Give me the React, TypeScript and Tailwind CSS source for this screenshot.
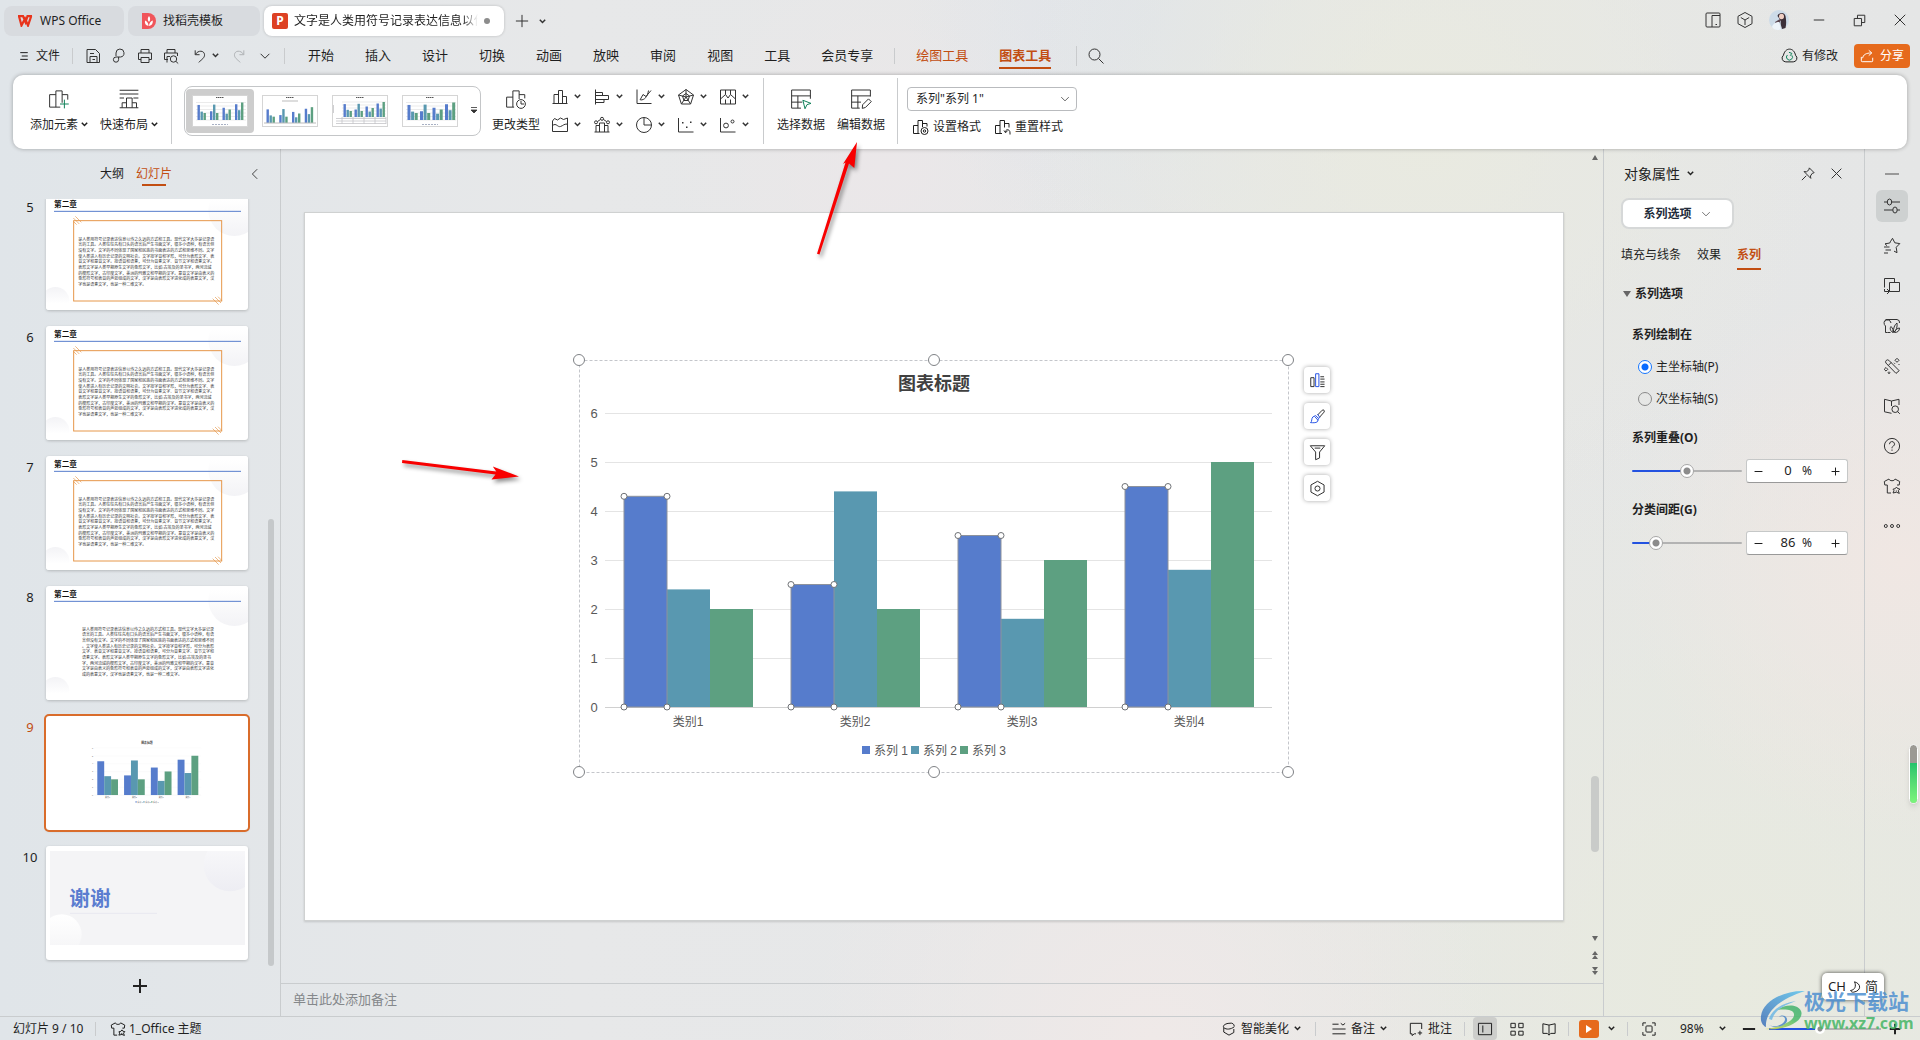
import {useState} from 'react';
import type {ReactNode} from 'react';
import {clsx} from 'clsx';

// All glyphs are drawn on a 16x16 grid, the stroke stays 1px at any size
const icons: Record<string, ReactNode> = {
    menu: <path d="M3 3.5h10M5 8h8M3 12.5h10"/>,
    save: <path d="M2 14.5v-13h8.5l4 4v9zM5 14.5V8.5h7v6M5 5.5h4M7.5 11.5h2.5"/>,
    link: <path d="M5 8V5a4 4 0 1 1 4.5 4H5a2.6 2.6 0 1 0 2.6 2.6V9"/>,
    print: <path d="M4 5V1.5h8V5M4 11.5H1.5V5h13v6.5H12M4 9.5h8v5H4z"/>,
    preview: <><path d="M4 5V1.5h8V5M5 11.5H1.5V5h13v3M4 14.5V8.5h3"/><circle cx="10.5" cy="11" r="3.2"/><path d="M13 13.5l2.2 2"/></>,
    undo: <path d="M2.5 1.5v5h5M2.7 6.2C6 1 12.8 1.5 13.2 6.5 13.4 10 10 12 6.5 15.3"/>,
    redo: <path d="M13.5 1.5v5h-5M13.3 6.2C10 1 3.2 1.5 2.8 6.5 2.6 10 6 12 9.5 15.3"/>,
    down: <path d="M3 5.5l5 5 5-5"/>,
    left: <path d="M10.5 2.5L5 8l5.5 5.5"/>,
    plus: <path d="M8 1v14M1 8h14"/>,
    minus: <path d="M1 8h14"/>,
    close: <path d="M2 2l12 12M14 2L2 14"/>,
    search: <><circle cx="6.5" cy="6.5" r="5.5"/><path d="M10.5 10.5l5 5"/></>,
    split: <><rect x="1" y="1" width="14" height="14" rx="1"/><path d="M7 15V3.5h8M10.5 12.5h1.5"/></>,
    cube: <path d="M8 .5l7 3.8v7.4L8 15.5l-7-3.8V4.3zM3.8 5.5L8 8l4.2-2.5M8 8v5"/>,
    restore: <path d="M1.5 5.5h9v9h-9zM5.5 5.5v-4h9v9h-4"/>,
    cloud: <><path d="M4.5 14h7a3.5 3.5 0 0 0 2.2-6.2C13 4.5 11 2 8 2S3 4.5 2.3 7.8A3.5 3.5 0 0 0 4.5 14z"/><path stroke="#12825b" d="M6 7.5a2.8 2.8 0 1 0 4.2.3M7.5 5l2.7 1-1.5 2.2"/></>,
    share: <path d="M1.5 9v4.5a1 1 0 0 0 1 1h11a1 1 0 0 0 1-1V10M3 10.5C3.5 6.5 7 4.5 13 4.5M10 1.5l3.5 3-3.5 3"/>,
    addElement: <><path d="M.5 14.5V4.5h5M9 14.5H.5M5.5 14.5v-13h5v9.5M10.5 4.5h4.5v4"/><path stroke="#12825b" d="M12.3 8.5v7M8.8 12h7"/></>,
    quickLayout: <path d="M.5 1h15M.5 4h15M.5 7.2H4M11.5 7.2h4M.5 15h15M2.5 15v-4h3.5M6 15V7.2h4.5V15M10.5 11h3.5v4"/>,
    changeType: <><path d="M.5 14.5V6.5h5M6.5 14.5h-6M5.5 14.5v-13h5V8M10.5 4.5h4.5v3"/><circle cx="12" cy="12" r="3.5"/><path d="M12 9.6V12h2.4"/></>,
    col: <path d="M2 14.5v-9h4.5M6.5 14.5v-13h4v13M10.5 7.5h4v7M.5 14.5h15"/>,
    bar: <path d="M1.5 .5v15M1.5 3.5h7v3M1.5 6.5h13v4h-13M10 10.5v3H1.5"/>,
    line: <path d="M1 .5v14h14.5M4 11l3-5.5 3 2L15 1.5M4.5 11c4 0 7-3 8-9.5"/>,
    radar: <path d="M8 .5l7.5 5.5-2.9 9H3.4L.5 6zM8 .5v7.5M15.5 6L8 8M12.6 15L8 8M3.4 15L8 8M.5 6L8 8M8 4.5L11.5 7 10 11.5H6L4.5 7z"/>,
    map: <path d="M.5 1h15v14H.5zM5.5 1v4.5M10.5 1v4.5M.5 10l5-4.5 2.5 3.5 2.5-3.5 5 4.5M5.5 10.5V15M10.5 10.5V15"/>,
    area: <path d="M.5 14.5V4l2-2.5 3 1.5 3-2 3 1.5 4-1.5v13.5zM.5 8.5c4-3 5 2 8 1s3-2.5 7-2.5"/>,
    combo: <><path d="M2 15V8.5h3.5M5.5 15V6h5v9M10.5 8.5H14V15M.5 15h15M3.5 4.5l3-2M9.5 2.5l3 2"/><circle cx="2" cy="5.3" r="1.5"/><circle cx="8" cy="1.8" r="1.5"/><circle cx="14" cy="5.3" r="1.5"/></>,
    pie: <><circle cx="8" cy="8" r="7.5"/><path d="M8 .5V8h7.5"/></>,
    scatter: <><path d="M.5 1v14h15"/><path fill="currentColor" stroke="none" d="M4 5h1.5v1.5H4zM8 9.5h1.5V11H8zM12 4.5h1.5V6H12z"/></>,
    bubble: <><path d="M.5 1v14h15"/><circle cx="6" cy="8.5" r="2.4"/><circle cx="12.5" cy="4.5" r="1.5"/></>,
    selectData: <><path d="M.5 .8h15v7M.5 .8v14.5H8M.5 5.5h15M.5 10.5H9M5.5 5.5v9.8"/><path stroke="#12825b" d="M9.5 9l6.5 2.5-3.2 1-1.6 3.3z"/></>,
    editData: <path d="M.5 .8h15V6M.5 .8v14.5H7M.5 5.5h15M.5 10.5H8M5.5 5.5v9.8M9 15.5l.3-2.9 4.7-4.7 2.2 2.2-4.7 4.7z"/>,
    setFormat: <><path d="M.5 14.5v-8h4.5M6.5 14.5h-6M5 14.5v-13h4.5V8M9.5 4.5h4.5v3"/><circle cx="11.5" cy="12" r="3.5"/><circle cx="11.5" cy="12" r="1.2"/></>,
    resetStyle: <path d="M.5 14.5v-8h4.5M7 14.5H.5M5 14.5v-13h4.5v7M9.5 4.5h4.5v4M9 11.5l1.5 2 2-1.5M10.3 13.5c0-4 5-3.5 4.7.5v1.5"/>,
    pin: <path d="M9.5 1l5.5 5.5-2.2.8-2 3 .4 2.7L3.5 5.2l2.7.3 2.8-2.2zM6 10L1 15"/>,
    sliders: <><path d="M0 4h3.3M7.7 4H16M0 12h8.8M13.2 12H16"/><ellipse cx="5.5" cy="4" rx="2.2" ry="3"/><ellipse cx="11" cy="12" rx="2.2" ry="3"/></>,
    star: <path d="M6.5 3.5L8.5 .3l2.3 4.5 5 .8-3.6 3.7.8 5.4-3-1.6M6.5 3.3L5.8 5l-4.8.8L3 7.7M0 9h5.5M1.5 12H7M0 15h4"/>,
    swap: <path d="M.5 9.5v-9h10v4M5.5 4.5h10v9h-10zM.5 11v2.5h4.5M3 11l2.5 2.5L3 16"/>,
    image: <path d="M3.5 14.5H1.5V8A4 4 0 0 1 2 1.5h11a3 3 0 0 1 2.5 3.5M1 3a3.5 3.5 0 0 1 6 2M3.5 14.5h3M8.5 14.5C5.5 12 6 9.5 7 8.5c2 2 2.5 4 1.5 6zM9.5 14.5C9 11 10.5 6.5 13 5c.5 4-.5 7.5-3.5 9.5zM10.5 14.5c.5-2.5 3-4.5 5-4.5 0 3-2 4.5-5 4.5z"/>,
    magic: <><path d="M4.8 2.3a2 2 0 0 0-2.8 2.8l10 10.3 3.2-2.7zM4.3 7.5l3-3.2"/><path d="M13 .3l2 2-2 2-2-2zM10 4.8l1 1M2 9.5l1.8 1.8L2 13.1.2 11.3zM5 13.8l1 1-1 1-1-1zM15 6v1"/></>,
    book: <><path d="M7.5 3L.5 1.3v12.5l7 1.5M7.5 3l7.5-1.7V7M7.5 3v5"/><circle cx="11.2" cy="11.2" r="3.3"/><path d="M13.5 13.5l2.3 2.3"/></>,
    help: <><circle cx="8" cy="8" r="7.6"/><path d="M5.5 6.2a2.5 2.5 0 1 1 3.8 2C8.3 8.7 8 9 8 10.3M8 11.5v1.3"/></>,
    shirt: <path d="M7 15H3.3V7H.8L.3 3.5 5 1c.5 2.3 5.5 2.3 6 0l4.7 2.5L15.2 7H13M9 15l1-2.3-1-1.5 2.2-.5L12.5 9l1 1.5 2.3.5-1.5 1.7 1 2.7-2.8-1.2zM12.3 13.5v-1"/>,
    more: <><circle cx="1.8" cy="8" r="1.5"/><circle cx="8" cy="8" r="1.5"/><circle cx="14.2" cy="8" r="1.5"/></>,
    chartParts: <><path d="M.8 5h3.5v9.5H.8zM11 6.5h4.5M11 9.5h4.5M11 12h4.5M11 14.5h4.5M11 4h4"/><path stroke="#2b57e6" d="M6 .8h3.5v13.7H6z"/></>,
    brush: <><path d="M8 6.5l5-5.2c1.5-1 3 .5 2 2L10 9"/><path stroke="#2b57e6" d="M6 7l3 3-1 3.5c-2 1.5-5 1.2-7.5 1 2-1 .8-4.5 2.5-6zM5 8l3.5 4M8 5.5L10.5 9 9 10"/></>,
    filter: <path d="M.3 .8h15.4L10.2 7.5v6.3L6 15.7V7.5zM5 3.3h6"/>,
    hex: <><path d="M8 .3l7 3.9v7.6l-7 3.9-7-3.9V4.2z"/><circle cx="8" cy="8" r="2.7"/></>,
    beautify: <path d="M2 6.5v5L8 15l5.5-3V8M2 6.5c-2-3 3.5-5 6-5M2 6.5c3 2.5 8 2 12-1M8 1.5c4-1 6 1 6 3.5"/>,
    notes: <path d="M.5 2.5h7M10 1.5l2.5 2L15 1.5M.5 8h15M.5 13.5h15"/>,
    comment: <path d="M8 13.5H6l-2.5 2v-2H1.5v-12h13V8M12.5 10v5M10 12.5h5"/>,
    viewNormal: <path d="M.5 1.5h15v13H.5zM5.5 4v8"/>,
    viewGrid: <path d="M1 1.5h5v5H1zM10 1.5h5v5h-5zM1 10.5h5v4.5H1zM10 10.5h5v4.5h-5z"/>,
    viewBook: <path d="M8 3.5L1 2v11h5l2 2 2-2h5V2zM8 3.5V15"/>,
    fit: <><path d="M1 4.5V1h3.5M11.5 1H15v3.5M15 11.5V15h-3.5M4.5 15H1v-3.5"/><rect x="4.5" y="4.5" width="7" height="7" rx="1"/></>,
};

const Icon = ({name, size = 16, className}: {name: string; size?: number; className?: string}) => (
    <svg
        viewBox="0 0 16 16"
        width={size}
        height={size}
        fill="none"
        stroke="currentColor"
        aria-hidden="true"
        className={clsx('shrink-0 overflow-visible [&_*]:[vector-effect:non-scaling-stroke]', className)}
    >
        {icons[name]}
    </svg>
);

const Caret = ({className}: {className?: string}) => (
    <svg viewBox="0 0 7 5" width="7" height="5" fill="none" stroke="currentColor" strokeWidth="1.5" className={clsx('shrink-0', className)}>
        <path d="M.8 .8l2.7 2.7L6.2 .8"/>
    </svg>
);

const Divider = ({className}: {className?: string}) => <div className={clsx('w-px shrink-0 bg-[#c9cbcd]', className)}/>;

const CATEGORIES = ['类别1', '类别2', '类别3', '类别4'];
const SERIES = [
    {name: '系列 1', color: '#567ccc', values: [4.3, 2.5, 3.5, 4.5]},
    {name: '系列 2', color: '#5998b0', values: [2.4, 4.4, 1.8, 2.8]},
    {name: '系列 3', color: '#5da081', values: [2, 2, 3, 5]},
];
const PITCH = 167;
const BAR = 43;
const barX = (cat: number, series: number) => 45 + cat * PITCH + series * BAR;
const valueY = (v: number) => 347 - v * 49;

// Plot, axis labels and legend in the chart's own 710x412 box
const ChartArt = () => (
    <g fontFamily="'Liberation Sans', 'Noto Sans CJK SC', sans-serif" fill="#595959">
        <text x="355" y="30" fontSize="18" fontWeight="700" textAnchor="middle" fill="#404040">图表标题</text>
        {[0, 1, 2, 3, 4, 5, 6].map(v => (
            <g key={v}>
                <path d={`M26 ${valueY(v) + 0.5}H693`} stroke={v === 0 ? '#d0d0d0' : '#e4e4e4'}/>
                <text x="15" y={valueY(v) + 5} fontSize="13" textAnchor="middle">{v}</text>
            </g>
        ))}
        {SERIES.map((s, i) => s.values.map((v, c) => (
            <rect key={`${i}-${c}`} x={barX(c, i)} y={valueY(v)} width={BAR} height={v * 49} fill={s.color}/>
        )))}
        {CATEGORIES.map((c, i) => (
            <text key={c} x={109 + i * PITCH} y="366" fontSize="12" textAnchor="middle">{c}</text>
        ))}
        {SERIES.map((s, i) => (
            <g key={s.name}>
                <rect x={283 + i * 49} y="386" width="8" height="8" fill={s.color}/>
                <text x={295 + i * 49} y="395" fontSize="12">{s.name}</text>
            </g>
        ))}
    </g>
);

const ChartObject = () => (
    <svg viewBox="0 0 710 412" width="710" height="412" className="absolute left-[274px] top-[147px] overflow-visible">
        <rect x=".5" y=".5" width="709" height="412" fill="none" stroke="#c4c6cb" strokeDasharray="3 2"/>
        <ChartArt/>
        {SERIES[0].values.map((v, c) => {
            const x = barX(c, 0);
            const corners = [[x, valueY(v)], [x + BAR, valueY(v)], [x, 347], [x + BAR, 347]];
            return (
                <g key={c}>
                    <rect x={x} y={valueY(v)} width={BAR} height={v * 49} fill="none" stroke="#8d929c"/>
                    {corners.map(([cx, cy], k) => (
                        <circle key={k} cx={cx} cy={cy} r="3" fill="#fff" stroke="#6f7276"/>
                    ))}
                </g>
            );
        })}
        {[0, 355, 709].map(x => [0, 412].map(y => (
            <circle key={`${x}-${y}`} cx={x} cy={y} r="5.5" fill="#fff" stroke="#7f8286"/>
        )))}
    </svg>
);

const BODY = '是人类用符号记录表达信息以传之久远的方式和工具。现代文字大多是记录语言的工具。人类往往先有口头的语言后产生书面文字，很多小语种，有语言但没有文字。文字的不同体现了国家和民族的书面表达的方式和思维不同。文字使人类进入有历史记录的文明社会。文字按字音和字形，可分为表形文字、表音文字和意音文字。按语音和语素，可分为音素文字、音节文字和语素文字。表形文字是人类早期原生文字的象形文字，比如:古埃及的圣书字，两河流域的楔形文字，古印度文字，美洲的玛雅文和早期的汉字。意音文字是由表义的象形符号和表音的声旁组成的文字，汉字是由表形文字进化成的表意文字，汉字也是语素文字，也是一种二维文字。';

const wrap = (text: string, n: number) => {
    const lines: string[] = [];
    for (let i = 0; i < text.length; i += n) lines.push(text.slice(i, i + n));
    return lines;
};

const TextSlide = ({framed}: {framed?: boolean}) => (
    <svg viewBox="0 0 606 342" className="block w-full" fontFamily="'Noto Sans CJK SC', sans-serif">
        <defs>
            <linearGradient id="blob" x1="0" y1="0" x2="0" y2="1">
                <stop offset=".3" stopColor="#fff"/>
                <stop offset="1" stopColor="#f3f3f6"/>
            </linearGradient>
            <linearGradient id="blobFlip" x1="0" y1="1" x2="0" y2="0">
                <stop offset=".4" stopColor="#fff"/>
                <stop offset="1" stopColor="#f3f3f6"/>
            </linearGradient>
        </defs>
        <circle cx="565" cy="42" r="78" fill="url(#blob)"/>
        <circle cx="28" cy="315" r="42" fill="url(#blobFlip)"/>
        <text x="24" y="32" fontSize="23" fontWeight="700" fill="#111">第二章</text>
        <path d="M24 46H585" stroke="#567ccc" strokeWidth="3"/>
        {framed && (
            <g stroke="#e6974a" strokeWidth="3" fill="none">
                <rect x="83" y="74" width="444" height="241"/>
                <path d="M82 66l18 18M88 61l18 18M82 76l10 10M500 308l18 18M507 303l18 18M516 302l11 11" strokeWidth="2"/>
            </g>
        )}
        {wrap(BODY, framed ? 34 : 33).map((l, i) => (
            <text key={i} x={framed ? 97 : 108} y={134 + i * 17} fontSize="12" fill="#333">{l}</text>
        ))}
    </svg>
);

const ChartSlide = () => (
    <svg viewBox="0 0 1260 711" className="block w-full">
        <g transform="translate(275 146)"><ChartArt/></g>
    </svg>
);

const ThanksSlide = () => (
    <svg viewBox="0 0 606 342" className="block w-full" fontFamily="'Noto Sans CJK SC', sans-serif">
        <defs>
            <linearGradient id="round" x1="0" y1="0" x2="0" y2="1">
                <stop offset="0" stopColor="#fafafb"/>
                <stop offset="1" stopColor="#ededf3"/>
            </linearGradient>
            <linearGradient id="roundFlip" x1="0" y1="0" x2="0" y2="1">
                <stop offset="0" stopColor="#fff"/>
                <stop offset="1" stopColor="#f4f4f6"/>
            </linearGradient>
            <clipPath id="page"><rect x="12" y="15" width="585" height="282"/></clipPath>
        </defs>
        <g clipPath="url(#page)">
            <rect x="12" y="15" width="585" height="282" fill="#f4f4f6"/>
            <circle cx="552" cy="57" r="79" fill="url(#round)"/>
            <circle cx="47" cy="265" r="60" fill="url(#roundFlip)"/>
        </g>
        <text x="70" y="180" fontSize="62" fontWeight="700" fill="#5b7dd0">谢谢</text>
        <path d="M72 202H333" stroke="#e8e8f0" strokeWidth="3"/>
    </svg>
);

const SLIDES = [
    {no: 5, art: <TextSlide framed/>},
    {no: 6, art: <TextSlide framed/>},
    {no: 7, art: <TextSlide framed/>},
    {no: 8, art: <TextSlide/>},
    {no: 9, art: <ChartSlide/>},
    {no: 10, art: <ThanksSlide/>},
];

const StyleThumb = ({kind}: {kind: number}) => {
    const base = kind === 2 ? 22 : kind === 1 ? 28 : 25;
    const top = kind === 1 ? 9 : 4;
    const left = kind === 2 ? 10 : kind === 1 ? 3 : 4;
    const unit = (base - top) / 6;
    const step = (54 - left) / 4;
    const w = kind === 3 ? 3 : 2.4;
    return (
        <svg viewBox="0 0 56 32" width="56" height="32" className="block">
            <rect x=".5" y=".5" width="55" height="31" fill="#fff" stroke="#d5d5d5"/>
            <path d="M24 2.5h8" stroke="#555" strokeDasharray="1.5 .5"/>
            {kind !== 1 && [0, 1, 2, 3, 4, 5].map(i => (
                <path key={i} d={`M${left} ${base - i * unit}H54`} stroke="#e2e2e2" strokeWidth=".7"/>
            ))}
            {SERIES.map((s, i) => s.values.map((v, c) => (
                <rect key={`${i}-${c}`} x={left + 1.5 + c * step + i * (w + 0.6)} y={base - v * unit} width={w} height={v * unit} fill={s.color}/>
            )))}
            {kind === 1 && <path d="M20 6h16M2 28h52" stroke="#bbb"/>}
            {kind === 2 && <path d="M4 23.5h50M4 26h50M4 28.5h50M10 22v7M21 22v7M32 22v7M43 22v7M54 22v7M1.5 10v8" stroke="#c4c4c8" strokeWidth=".8" fill="none"/>}
            {kind !== 2 && kind !== 1 && <path d="M20 29.5h16" stroke="#a9b1c4" strokeDasharray="2 1"/>}
        </svg>
    );
};

const TitleBar = () => (
    <header className="flex h-9 shrink-0 items-end pl-1">
        <button className="flex h-[30px] w-[120px] items-center rounded-lg bg-[#d8dbdf] pl-[13px] text-xs">
            <svg viewBox="0 0 16 12" width="16" height="12" fill="none" stroke="#e8341c" strokeWidth="2.2" className="mr-[7px]">
                <path d="M1 1.2h5l2.5 6 2-6H15M2 1.2l2.5 9.3L8 3.5l3 7 3.2-9.3"/>
            </svg>
            WPS Office
        </button>
        <button className="ml-1 flex h-[30px] w-[132px] items-center rounded-lg bg-[#d8dbdf] pl-[14px] text-xs">
            <svg viewBox="0 0 14 16" width="14" height="16" className="mr-[7px]">
                <path d="M0 0h6a8 8 0 0 1 0 16H0z" fill="#f0555a"/>
                <path d="M6.5 13C3.5 12.5 2.5 10.5 3 7.5c2 .7 3.5 2.5 3.5 5.5zM7 13c3-.5 4-2.5 3.8-5.5C8.5 8.3 7.2 10 7 13zM6.5 8.5C5.3 6.5 5.8 4.5 7 3c1.3 1.5 1.5 3.5.5 5.5z" fill="#fff"/>
            </svg>
            找稻壳模板
        </button>
        <div className="ml-1 flex h-[30px] w-[240px] items-center rounded-lg bg-white pl-2 text-xs shadow-[0_0_3px_rgba(0,0,0,0.2)]">
            <span className="mr-1.5 flex size-4 shrink-0 items-center justify-center rounded-[2px] bg-[#dd4124] text-xs font-bold text-white">P</span>
            <span className="w-[184px] overflow-hidden whitespace-nowrap [mask-image:linear-gradient(to_right,#000_92%,transparent)]">文字是人类用符号记录表达信息以传</span>
            <span className="ml-1.5 size-1.5 rounded-full bg-[#8c8c8c]"/>
        </div>
        <button aria-label="新建" className="ml-[11px] flex h-[30px] items-center text-[#333]"><Icon name="plus" size={14}/></button>
        <button aria-label="标签列表" className="ml-2.5 flex h-[30px] items-center text-[#333]"><Caret/></button>
        <div className="ml-auto flex h-[30px] items-center text-[#333]">
            <button aria-label="分屏" className="mb-0.5 mr-4"><Icon name="split"/></button>
            <button aria-label="应用" className="mb-0.5 mr-4"><Icon name="cube"/></button>
            <button aria-label="账号" className="mb-0.5 mr-6">
                <svg viewBox="0 0 20 20" width="20" height="20">
                    <circle cx="10" cy="10" r="10" fill="#cddbe8"/>
                    <path d="M8.5 6c1-3.5 7-4.5 8 0 .8 4 1 8 0 12l-3.5 1c-.5-3-2-5-1-8z" fill="#3b2f38"/>
                    <ellipse cx="12.5" cy="6.5" rx="2.5" ry="2.8" fill="#f0cfc4"/>
                    <path d="M6 12l5-3 1 1.5-4 5z" fill="#5a4650"/>
                    <path d="M3 17c1-3.5 4-5 7-5l2 7.5c-3.5 1-7 .5-9-2.5z" fill="#eef4fa"/>
                </svg>
            </button>
            <button aria-label="最小化" className="mb-0.5 mr-7"><Icon name="minus" size={12}/></button>
            <button aria-label="还原" className="mb-0.5 mr-[27px]"><Icon name="restore" size={13}/></button>
            <button aria-label="关闭" className="mb-0.5 mr-[13px]"><Icon name="close" size={14}/></button>
        </div>
    </header>
);

const MenuBar = () => (
    <nav className="flex h-[39px] shrink-0 items-center pl-[18px] text-[13px]">
        <button className="flex items-center gap-1.5 text-xs"><Icon name="menu" size={12}/>文件</button>
        <Divider className="ml-3 mr-3 h-4"/>
        <div className="flex items-center text-[#333]">
            <button aria-label="保存"><Icon name="save" size={16}/></button>
            <button aria-label="输出" className="ml-2.5"><Icon name="link" size={16}/></button>
            <button aria-label="打印" className="ml-2.5"><Icon name="print" size={16}/></button>
            <button aria-label="打印预览" className="ml-2.5"><Icon name="preview" size={16}/></button>
            <button aria-label="撤销" className="ml-3.5"><Icon name="undo" size={14}/></button>
            <button aria-label="撤销列表" className="ml-[5px]"><Caret/></button>
            <button aria-label="恢复" className="ml-[13px] text-[#b0b3b6]"><Icon name="redo" size={14}/></button>
            <button aria-label="更多" className="ml-3"><Icon name="down" size={14}/></button>
        </div>
        <Divider className="ml-3 h-4"/>
        <div className="ml-[23px] flex gap-[31px]">
            {['开始', '插入', '设计', '切换', '动画', '放映', '审阅', '视图', '工具', '会员专享'].map(t => (
                <button key={t} className="whitespace-nowrap">{t}</button>
            ))}
        </div>
        <Divider className="ml-[21px] h-4"/>
        <button className="ml-[21px] text-[#c24e12]">绘图工具</button>
        <button className="ml-[31px] border-b-2 border-t-2 border-t-transparent border-b-[#c24e12] py-0.5 font-bold text-[#c24e12]">图表工具</button>
        <Divider className="ml-[25px] h-5"/>
        <button aria-label="搜索" className="ml-[11px] text-[#333]"><Icon name="search" size={16}/></button>
        <button className="ml-auto flex items-center gap-1 text-xs"><Icon name="cloud" size={17}/>有修改</button>
        <button className="ml-4 mr-2.5 flex h-6 w-14 items-center justify-center gap-1.5 rounded bg-[#e66a1c] text-xs text-white"><Icon name="share" size={14}/>分享</button>
    </nav>
);

const BigTool = ({icon, label, caret, className}: {icon: string; label: string; caret?: boolean; className?: string}) => (
    <button className={clsx('flex flex-col items-center gap-2 text-xs whitespace-nowrap', className)}>
        <Icon name={icon} size={20} className="text-[#333]"/>
        <span className="flex h-4 items-center leading-4">
            {label}
            {caret && <Caret className="ml-[3px]"/>}
        </span>
    </button>
);

const CHART_TYPES = [['col', 'bar', 'line', 'radar', 'map'], ['area', 'combo', 'pie', 'scatter', 'bubble']];

const Ribbon = () => (
    <section className="relative z-10 ml-[13px] mr-[13px] flex h-[74px] shrink-0 items-center rounded-[10px] bg-white pb-[3px] shadow-[0_0_4px_rgba(0,0,0,0.3)]">
        <BigTool icon="addElement" label="添加元素" caret className="ml-[17px]"/>
        <BigTool icon="quickLayout" label="快速布局" caret className="ml-3"/>
        <Divider className="ml-[13px] h-[66px]"/>
        <div className="ml-3 flex h-[50px] items-center rounded-lg border border-[#c4c6c8] pl-px">
            {[0, 1, 2, 3].map(k => (
                <button key={k} aria-label={`样式 ${k + 1}`} className={clsx('mr-0.5 flex h-11 w-[68px] items-center justify-center rounded', k === 0 && 'bg-[#cdcdcd]')}>
                    <StyleThumb kind={k}/>
                </button>
            ))}
            <button aria-label="更多样式" className="flex w-[14px] justify-center pl-0.5">
                <svg viewBox="0 0 6 7" width="6" height="7"><path d="M0 .5h6M0 3l3 3 3-3z" stroke="#333" strokeWidth=".8" fill="#333"/></svg>
            </button>
        </div>
        <BigTool icon="changeType" label="更改类型" className="ml-[11px]"/>
        <div className="ml-3 grid grid-cols-5 gap-x-[13px] gap-y-3 text-[#333]">
            {CHART_TYPES.flat().map(t => (
                <button key={t} aria-label={t} className="flex items-center gap-[6px]">
                    <Icon name={t} size={16}/>
                    <Caret/>
                </button>
            ))}
        </div>
        <Divider className="ml-[14px] h-[66px]"/>
        <BigTool icon="selectData" label="选择数据" className="ml-[13px]"/>
        <BigTool icon="editData" label="编辑数据" className="ml-3"/>
        <Divider className="ml-3 h-[66px]"/>
        <div className="ml-[9px] flex flex-col gap-2 text-xs">
            <div className="relative">
                <select aria-label="图表元素" className="h-6 w-[170px] appearance-none rounded border border-[#b9bbbe] bg-white pl-2 text-xs">
                    <option>系列"系列 1"</option>
                </select>
                <Icon name="down" size={12} className="pointer-events-none absolute right-1.5 top-1.5 text-[#666]"/>
            </div>
            <div className="flex gap-3.5 pl-1.5">
                <button className="flex items-center gap-1"><Icon name="setFormat" size={16}/>设置格式</button>
                <button className="flex items-center gap-1"><Icon name="resetStyle" size={16}/>重置样式</button>
            </div>
        </div>
    </section>
);

const SlidePanel = () => {
    const [current, setCurrent] = useState(9);
    return (
        <aside className="flex w-[281px] shrink-0 flex-col border-r border-[#c9ccce]">
            <div className="flex h-[50px] items-center pl-[100px] text-xs">
                <button>大纲</button>
                <button className="relative ml-3 text-[#c24e12]">
                    幻灯片
                    <span className="absolute -bottom-1 left-1.5 h-0.5 w-6 bg-[#c24e12]"/>
                </button>
                <button aria-label="收起" className="ml-auto mr-[18px] text-[#444]"><Icon name="left" size={14}/></button>
            </div>
            <div className="flex min-h-0 flex-1 overflow-hidden">
                <ol className="-mt-[3px] flex flex-col gap-4">
                    {SLIDES.map(({no, art}) => (
                        <li key={no} className="flex">
                            <span className={clsx('ml-[22px] mr-2 mt-[3px] w-4 text-center text-[13px] leading-4', no === current && 'text-[#c24e12]')}>{no}</span>
                            <button
                                aria-label={`幻灯片 ${no}`}
                                onClick={() => setCurrent(no)}
                                className={clsx('h-[114px] w-[202px] overflow-hidden rounded-[3px] bg-white shadow-[0_1px_3px_rgba(0,0,0,0.2)]', no === current && 'outline-2 outline-[#d96c2b]')}
                            >
                                {art}
                            </button>
                        </li>
                    ))}
                </ol>
                <div className="ml-5 flex w-1.5 flex-col pb-1.5">
                    <div className="grow-[5]"/>
                    <div className="grow-[7] rounded-full bg-[#c5c8ca]"/>
                </div>
            </div>
            <div className="flex h-11 shrink-0 justify-center pt-1.5">
                <button aria-label="新建幻灯片" className="flex h-4 text-[#222]"><Icon name="plus" size={16} className="stroke-2"/></button>
            </div>
        </aside>
    );
};

const Triangle = ({d, h = 5}: {d: string; h?: number}) => (
    <svg viewBox={`0 0 6 ${h}`} width="6" height={h} fill="#666" className="shrink-0"><path d={d}/></svg>
);

const Stage = () => (
    <main className="flex min-w-0 flex-1 flex-col">
        <div className="flex min-h-0 flex-1">
            <div className="min-w-0 flex-1 pb-[62px] pl-[23px] pr-[23px] pt-[63px]">
                <div className="relative aspect-video w-full border border-[#cfd1d1] bg-white shadow-[0_1px_2px_rgba(0,0,0,0.15)]">
                    <ChartObject/>
                    <div className="absolute left-[999px] top-[154px] flex flex-col gap-2.5">
                        {[['chartParts', '图表元素'], ['brush', '图表样式'], ['filter', '图表筛选器'], ['hex', '设置']].map(([icon, label]) => (
                            <button key={icon} aria-label={label} className="flex size-[26px] items-center justify-center rounded bg-white text-[#333] shadow-[0_0_4px_rgba(0,0,0,0.35)]">
                                <Icon name={icon} size={15}/>
                            </button>
                        ))}
                    </div>
                </div>
            </div>
            <div className="flex w-4 flex-col items-center pb-2 pt-1.5">
                <Triangle d="M0 5L3 0l3 5z"/>
                <div className="grow-[22]"/>
                <div className="h-[76px] w-2 rounded-full bg-[#c9cbc9]"/>
                <div className="grow-[3]"/>
                <Triangle d="M0 0h6L3 5z"/>
                <div className="h-2.5"/>
                <Triangle h={8} d="M0 4l3-4 3 4zM0 8l3-4 3 4z"/>
                <div className="h-2"/>
                <Triangle h={8} d="M0 0h6L3 4zM0 4h6L3 8z"/>
            </div>
        </div>
        <div className="flex h-[33px] shrink-0 items-center border-t border-[#c9ccce] pl-3">
            <input aria-label="备注" placeholder="单击此处添加备注" className="w-full bg-transparent text-[13px] outline-none placeholder:text-[#85888b]"/>
        </div>
    </main>
);

const RANGE = 'block h-0.5 appearance-none rounded-full [&::-webkit-slider-thumb]:size-3.5 [&::-webkit-slider-thumb]:appearance-none [&::-webkit-slider-thumb]:rounded-full [&::-webkit-slider-thumb]:border [&::-webkit-slider-thumb]:border-[#a8a8a8] [&::-webkit-slider-thumb]:bg-[radial-gradient(circle,#8c8c8c_3px,#fff_4px)]';

const SliderRow = ({label, id, value, min, max, onChange}: any) => {
    const filled = ((value - min) / (max - min)) * 100;
    return (
        <div className="pl-[11px]">
            <label htmlFor={id} className="block font-bold">{label}</label>
            <div className="mt-[13px] flex items-center">
                <input
                    id={id}
                    type="range"
                    min={min}
                    max={max}
                    value={value}
                    onChange={e => onChange(+e.target.value)}
                    className={clsx(RANGE, 'w-[110px]')}
                    style={{background: `linear-gradient(to right, #2352e0 ${filled}%, #b3b3b3 ${filled}%)`}}
                />
                <div className="ml-1 flex h-6 w-[102px] items-center rounded-[3px] border border-[#c6c8c8] border-b-[#999] bg-white">
                    <button aria-label="减少" onClick={() => onChange(value - 1)} className="flex w-[22px] justify-center"><Icon name="minus" size={9}/></button>
                    <input aria-label={label} value={value} onChange={e => onChange(+e.target.value || 0)} className="ml-[7px] w-6 bg-transparent text-center text-[13px] outline-none"/>
                    <span className="ml-0.5 w-4 text-xs">%</span>
                    <button aria-label="增加" onClick={() => onChange(value + 1)} className="ml-auto flex w-6 justify-center"><Icon name="plus" size={9}/></button>
                </div>
            </div>
        </div>
    );
};

const PropertyPanel = () => {
    const [axis, setAxis] = useState('P');
    const [overlap, setOverlap] = useState(0);
    const [gap, setGap] = useState(86);
    return (
        <aside className="w-[261px] shrink-0 border-l border-[#c9ccce] pl-[17px] text-xs">
            <div className="flex h-[49px] items-center pl-[3px] text-[#333]">
                <button className="flex items-center gap-[7px] text-sm text-[#222]">对象属性<Caret/></button>
                <button aria-label="固定" className="ml-auto"><Icon name="pin" size={14}/></button>
                <button aria-label="关闭" className="ml-[15px] mr-[21px]"><Icon name="close" size={13}/></button>
            </div>
            <button className="flex h-[31px] w-[113px] items-center justify-center gap-2 rounded-lg border-2 border-[#d6d8d8] bg-white font-bold text-[#222b3a]">
                系列选项<Icon name="down" size={12} className="text-[#777]"/>
            </button>
            <div className="mt-[17px] flex gap-4">
                <button className="h-6 pb-1.5">填充与线条</button>
                <button className="h-6 pb-1.5">效果</button>
                <button className="h-6 border-b-2 border-[#c24e12] pb-1 font-bold text-[#c24e12]">系列</button>
            </div>
            <h3 className="mt-4 flex items-center gap-1 pl-0.5 font-bold">
                <svg viewBox="0 0 8 6" width="8" height="6" fill="#666"><path d="M0 0h8L4 6z"/></svg>
                系列选项
            </h3>
            <fieldset className="mt-[25px] pl-[11px]">
                <legend className="font-bold">系列绘制在</legend>
                {[['P', '主坐标轴(P)'], ['S', '次坐标轴(S)']].map(([v, label]) => (
                    <label key={v} className="mt-4 flex items-center gap-1 pl-1.5">
                        <input
                            type="radio"
                            name="axis"
                            checked={axis === v}
                            onChange={() => setAxis(v)}
                            className="size-3.5 appearance-none rounded-full border border-[#8a8a8a] checked:border-[#1677ff] checked:bg-[radial-gradient(circle,#0a6cff_3px,#fff_4px)]"
                        />
                        {label}
                    </label>
                ))}
            </fieldset>
            <div className="mt-[23px] flex flex-col gap-[19px]">
                <SliderRow id="overlap" label="系列重叠(O)" min={-100} max={100} value={overlap} onChange={setOverlap}/>
                <SliderRow id="gap" label="分类间距(G)" min={0} max={500} value={gap} onChange={setGap}/>
            </div>
        </aside>
    );
};

const SideStrip = () => (
    <aside className="flex w-14 shrink-0 flex-col items-center gap-2 border-l border-[#c9ccce] pr-0.5 pt-4 text-[#333]">
        <button aria-label="收起" className="flex h-[17px] items-center text-[#999]"><Icon name="minus" size={16} className="stroke-2"/></button>
        {['sliders', 'star', 'swap', 'image', 'magic', 'book', 'help', 'shirt', 'more'].map((n, i) => (
            <button key={n} aria-label={n} className={clsx('flex size-8 items-center justify-center rounded-md', i === 0 && 'bg-[#ced1d1]')}>
                <Icon name={n} size={16}/>
            </button>
        ))}
    </aside>
);

const StatusBar = () => {
    const [zoom, setZoom] = useState(45);
    return (
        <footer className="flex h-6 shrink-0 items-center border-t border-[#c9ccce] pl-[13px] text-xs whitespace-nowrap">
            <span className="w-[75px]">幻灯片 9 / 10</span>
            <Divider className="ml-[7px] h-3.5"/>
            <button className="ml-[15px] flex items-center gap-1"><Icon name="shirt" size={14}/>1_Office 主题</button>
            <div className="ml-auto flex h-full items-center text-[#222]">
                <button className="flex items-center gap-[5px]"><Icon name="beautify" size={14}/>智能美化<Caret/></button>
                <Divider className="ml-3.5 h-3.5"/>
                <button className="ml-4 flex items-center gap-[5px]"><Icon name="notes" size={14}/>备注<Caret/></button>
                <button className="ml-[22px] flex items-center gap-[5px]"><Icon name="comment" size={14}/>批注</button>
                <Divider className="ml-3 h-3.5"/>
                <button aria-label="普通视图" className="ml-2 flex h-full w-6 items-center justify-center rounded bg-[#cdcecb]"><Icon name="viewNormal" size={14}/></button>
                <button aria-label="幻灯片浏览" className="ml-[13px]"><Icon name="viewGrid" size={14}/></button>
                <button aria-label="阅读视图" className="ml-[18px]"><Icon name="viewBook" size={14}/></button>
                <Divider className="ml-3 h-3.5"/>
                <button aria-label="放映" className="ml-2.5 flex h-[18px] w-5 items-center justify-center rounded-[3px] bg-[#e66a1c]">
                    <svg viewBox="0 0 6 8" width="6" height="8" fill="#fff"><path d="M0 0l6 4-6 4z"/></svg>
                </button>
                <button aria-label="放映选项" className="ml-[9px]"><Caret/></button>
                <Divider className="ml-3 h-3.5"/>
                <button aria-label="适应窗口" className="ml-3.5"><Icon name="fit" size={14}/></button>
                <button className="ml-6 flex w-[46px] items-center justify-between">98%<Caret/></button>
                <button aria-label="缩小" className="ml-4"><Icon name="minus" size={14} className="stroke-2"/></button>
                <input
                    type="range"
                    aria-label="缩放"
                    value={zoom}
                    onChange={e => setZoom(+e.target.value)}
                    className="ml-[13px] block h-0.5 w-[112px] appearance-none [&::-webkit-slider-thumb]:size-2.5 [&::-webkit-slider-thumb]:appearance-none [&::-webkit-slider-thumb]:rounded-full [&::-webkit-slider-thumb]:bg-[radial-gradient(circle,#8c8c8c_2px,#fff_3px)]"
                    style={{background: `linear-gradient(to right, #2352e0 ${zoom}%, #b3b3b3 ${zoom}%)`}}
                />
                <button aria-label="放大" className="ml-2 mr-[19px]"><Icon name="plus" size={12} className="stroke-2"/></button>
            </div>
        </footer>
    );
};

// Red pointers drawn over the window
const Arrows = () => (
    <svg viewBox="0 0 520 350" width="520" height="350" fill="#f80000" className="pointer-events-none absolute left-[400px] top-[140px] z-20 overflow-visible drop-shadow-[2px_3px_2px_rgba(0,0,0,0.45)]">
        <path d="M457 2l-2.7 26-5.3-4.5L419.5 114.5l-2.5-.8L445.5 22.5l-2.5 1.5z"/>
        <path d="M119 336.5l-27.5 3 4-5L2 323l.3-3 94 11.5-3.5-5z"/>
    </svg>
);

const Watermark = () => (
    <div className="pointer-events-none absolute bottom-[7px] right-2.5 z-20 flex items-center">
        <svg viewBox="0 0 46 42" width="46" height="42" opacity=".85">
            <defs>
                <linearGradient id="sky" x1="0" y1="1" x2="1" y2="0"><stop offset="0" stopColor="#3f6fb8"/><stop offset="1" stopColor="#5cc4ee"/></linearGradient>
                <linearGradient id="leaf" x1="0" y1="1" x2="1" y2="0"><stop offset="0" stopColor="#e6e04a"/><stop offset=".6" stopColor="#4dbb6a"/><stop offset="1" stopColor="#3fae70"/></linearGradient>
            </defs>
            <path d="M45 1C26 0 3 10 1 26c-1 7 3 10 5 11-1-12 8-26 39-36z" fill="url(#sky)"/>
            <path d="M17 20c6-5 20-7 24 1 4 9-14 20-36 18 16-2 30-8 29-15-1-5-10-5-17-4z" fill="url(#leaf)"/>
            <path d="M8 34c2 3 12 3 16-2 3-4-1-7-5-5 3-3 9-1 8 4-2 6-14 8-19 3z" fill="#4a86c8"/>
            <path d="M9 29c2-8 12-16 27-18-14 5-22 10-24 19z" fill="#6fb8e4"/>
        </svg>
        <div className="-ml-0.5 w-[106px]">
            <p className="text-[21px] leading-[24px] font-bold text-[#4d8fd0]/85">极光下载站</p>
            <p className="text-base leading-5 font-bold text-[#45b565]/85">www.xz7.com</p>
        </div>
    </div>
);

export default function App() {
    return (
        <div className="relative flex h-screen flex-col overflow-hidden bg-[#e5e7e8] bg-[radial-gradient(circle_at_74%_12%,#e9eae0_0,transparent_24%),radial-gradient(circle_at_60%_2%,#e0e4ea_0,transparent_16%),radial-gradient(circle_at_99%_54%,#f0e7e3_0,transparent_14%),radial-gradient(circle_at_60%_100%,#efe9e8_0,transparent_22%),radial-gradient(circle_at_90%_94%,#e8eadf_0,transparent_30%),radial-gradient(circle_at_46%_16%,#ebe7e9_0,transparent_16%),linear-gradient(to_right,#e0e5e9_0,#e7e8e9_30%,#e5e6e6)] font-['Noto_Sans','Noto_Sans_CJK_SC',sans-serif] text-[#1f1f1f]">
            <TitleBar/>
            <MenuBar/>
            <Ribbon/>
            <div className="flex min-h-0 flex-1">
                <SlidePanel/>
                <Stage/>
                <PropertyPanel/>
                <SideStrip/>
            </div>
            <StatusBar/>
            <Arrows/>
            <div className="absolute right-0.5 top-[744px] flex h-[60px] w-[9px] flex-col overflow-hidden rounded-full border border-white bg-[#9c9a94] shadow-md">
                <div className="mt-[18px] flex-1 bg-gradient-to-b from-[#22c46c] to-[#7cf57c]"/>
            </div>
            <div className="absolute bottom-10 right-9 z-10 flex h-[27px] w-[62px] items-center justify-center gap-1 rounded-[5px] bg-white text-[13px] shadow-[0_0_4px_rgba(0,0,0,0.7)]">
                CH
                <svg viewBox="0 0 11 12" width="11" height="12" fill="none" stroke="#222"><path d="M4.5 .8c7 2 7 9-1 10.4-1.5.2-2.5-.7-3-1.7C5 9 6.5 5 4.5 .8z"/></svg>
                简
            </div>
            <Watermark/>
        </div>
    );
}
